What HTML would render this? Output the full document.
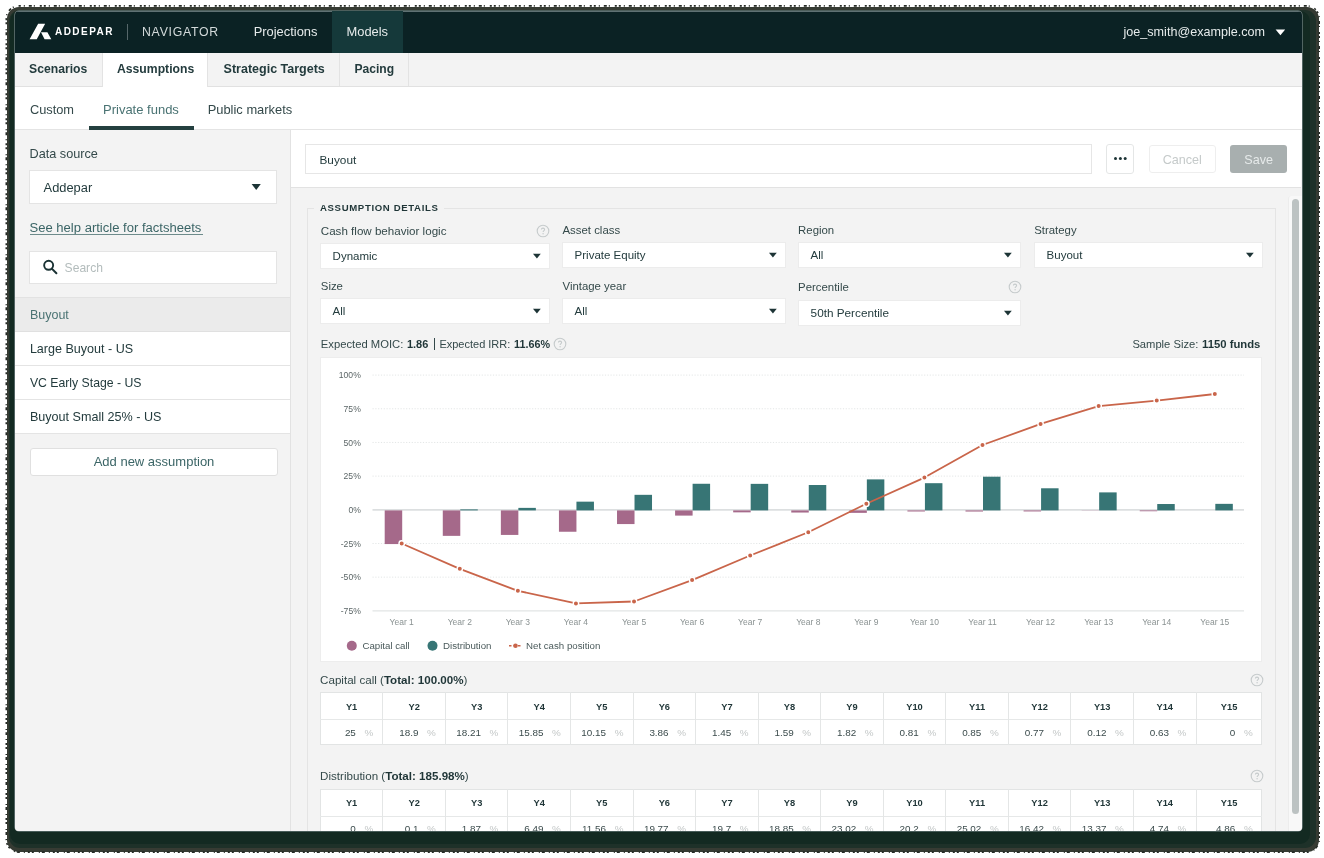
<!DOCTYPE html><html><head><meta charset="utf-8"><style>
html,body{margin:0;padding:0;width:1324px;height:858px;overflow:hidden;background:#fff;font-family:"Liberation Sans", sans-serif;}
.a{position:absolute;}
</style></head><body>
<div class="a" style="left:7px;top:6.5px;width:1311.5px;height:845px;border-radius:12px;background:#363b33;"></div>
<svg class="a" style="left:0;top:0" width="1324" height="858"><rect x="6.3" y="5.9" width="1312.9" height="846.2" rx="12.5" fill="none" stroke="#262b26" stroke-width="1.6" stroke-dasharray="2 3 1 4 3 2 1 5 2 2"/></svg>
<div class="a" style="left:8.5px;top:10px;width:1307.5px;height:838px;border-radius:11px;background:#1e3129;"></div>
<div class="a" style="left:10px;top:10.5px;width:1300px;height:833px;border-radius:10px;background:#132a22;"></div>
<div class="a" style="left:15px;top:11px;width:1287px;height:820px;border-radius:4px;overflow:hidden;will-change:transform;box-shadow:0 0 0 0.6px #7d8d8f;">
<div class="a" style="left:0;top:0;width:1287px;height:820px;background:#f3f3f3;"></div>
<div class="a" style="left:-15px;top:-11px;width:1324px;height:858px;">
<div style="position:absolute;left:0px;top:0px;width:1324px;height:53px;background:#0b2224;"></div>
<div style="position:absolute;left:0px;top:11px;width:1324px;height:1.4000000000000004px;background:#5f7173;"></div>
<div style="position:absolute;left:332px;top:0px;width:71px;height:53px;background:#15393a;"></div>
<svg class="a" style="left:29px;top:23px" width="24" height="18" viewBox="0 0 24 18"><path d="M9.15 0.8H16.15L7.75 16.3H0.6Z M12 9.2H18.4L22.3 16.3H15.6Z" fill="#fff"/></svg>
<div style="position:absolute;left:55px;top:25px;font-size:10.0px;line-height:13px;font-weight:700;color:#ffffff;letter-spacing:1.45px;white-space:nowrap;">ADDEPAR</div>
<div style="position:absolute;left:127px;top:24px;width:1px;height:16px;background:#56676a;"></div>
<div style="position:absolute;left:142px;top:24px;font-size:12.3px;line-height:16px;font-weight:400;color:#d3dada;letter-spacing:0.73px;white-space:nowrap;">NAVIGATOR</div>
<div style="position:absolute;left:253.7px;top:23px;font-size:12.9px;line-height:17px;font-weight:400;color:#e6ebeb;letter-spacing:0px;white-space:nowrap;">Projections</div>
<div style="position:absolute;left:346.5px;top:23px;font-size:12.9px;line-height:17px;font-weight:400;color:#e6ebeb;letter-spacing:0px;white-space:nowrap;">Models</div>
<div style="position:absolute;left:1123.5px;top:24px;font-size:12.6px;line-height:16px;font-weight:400;color:#e6ebeb;letter-spacing:0px;white-space:nowrap;">joe_smith@example.com</div>
<svg class="a" style="left:1275px;top:29px" width="11" height="7" viewBox="0 0 11 7"><path d="M0.6 0.5H10.2L5.4 6.2Z" fill="#fff"/></svg>
<div style="position:absolute;left:0px;top:53px;width:1324px;height:34px;background:#f3f3f3;border-bottom:1px solid #e1e1e1;box-sizing:border-box;"></div>
<div style="position:absolute;left:102px;top:53px;width:106px;height:34px;background:#fff;border-left:1px solid #e3e3e3;border-right:1px solid #e3e3e3;box-sizing:border-box;"></div>
<div style="position:absolute;left:339px;top:53px;width:1px;height:33px;background:#e3e3e3;"></div>
<div style="position:absolute;left:408px;top:53px;width:1px;height:33px;background:#e3e3e3;"></div>
<div style="position:absolute;left:29px;top:61px;font-size:12.2px;line-height:16px;font-weight:700;color:#233b3d;letter-spacing:0px;white-space:nowrap;">Scenarios</div>
<div style="position:absolute;left:117px;top:61px;font-size:12.2px;line-height:16px;font-weight:700;color:#233b3d;letter-spacing:0px;white-space:nowrap;">Assumptions</div>
<div style="position:absolute;left:223.6px;top:61px;font-size:12.5px;line-height:16px;font-weight:700;color:#233b3d;letter-spacing:0px;white-space:nowrap;">Strategic Targets</div>
<div style="position:absolute;left:354.4px;top:61px;font-size:12.1px;line-height:16px;font-weight:700;color:#233b3d;letter-spacing:0px;white-space:nowrap;">Pacing</div>
<div style="position:absolute;left:0px;top:87px;width:1324px;height:43px;background:#fff;border-bottom:1px solid #e4e4e4;box-sizing:border-box;"></div>
<div style="position:absolute;left:29.9px;top:102px;font-size:12.8px;line-height:16px;font-weight:400;color:#34494a;letter-spacing:0px;white-space:nowrap;">Custom</div>
<div style="position:absolute;left:103px;top:101px;font-size:13.0px;line-height:17px;font-weight:400;color:#4a7373;letter-spacing:0px;white-space:nowrap;">Private funds</div>
<div style="position:absolute;left:207.7px;top:101px;font-size:12.9px;line-height:17px;font-weight:400;color:#34494a;letter-spacing:0px;white-space:nowrap;">Public markets</div>
<div style="position:absolute;left:89px;top:125.5px;width:105px;height:4.0px;background:#24403f;"></div>
<div style="position:absolute;left:15px;top:130px;width:276px;height:701px;background:#f3f3f3;border-right:1px solid #e2e2e2;box-sizing:border-box;"></div>
<div style="position:absolute;left:29.5px;top:146px;font-size:12.7px;line-height:16px;font-weight:400;color:#34494a;letter-spacing:0px;white-space:nowrap;">Data source</div>
<div style="position:absolute;left:29px;top:170px;width:248px;height:34px;background:#fff;border:1px solid #e4e4e4;box-sizing:border-box;"></div>
<div style="position:absolute;left:43.6px;top:179px;font-size:12.85px;line-height:17px;font-weight:400;color:#233b3d;letter-spacing:0px;white-space:nowrap;">Addepar</div>
<svg class="a" style="left:251px;top:183px" width="11" height="8" viewBox="0 0 11 8"><path d="M0.6 1H9.8L5.2 7Z" fill="#1d3436"/></svg>
<div style="position:absolute;left:29.5px;top:219px;font-size:13.05px;line-height:17px;font-weight:400;color:#3b6566;letter-spacing:0px;white-space:nowrap;">See help article for factsheets</div>
<div style="position:absolute;left:29.5px;top:233.8px;width:173.0px;height:1.1999999999999886px;background:#6d8b8b;"></div>
<div style="position:absolute;left:29px;top:251px;width:248px;height:33px;background:#fff;border:1px solid #e4e4e4;box-sizing:border-box;"></div>
<svg class="a" style="left:42px;top:259px" width="17" height="17" viewBox="0 0 17 17"><circle cx="6.65" cy="6.3" r="4.5" fill="none" stroke="#1a3234" stroke-width="1.9"/><path d="M9.8 9.6L14.4 14.3" stroke="#1a3234" stroke-width="2" stroke-linecap="round"/></svg>
<div style="position:absolute;left:64.6px;top:260px;font-size:12.1px;line-height:16px;font-weight:400;color:#b3bcbc;letter-spacing:0px;white-space:nowrap;">Search</div>
<div style="position:absolute;left:15px;top:297px;width:275px;height:1px;background:#e2e2e2;"></div>
<div style="position:absolute;left:15px;top:298px;width:275px;height:34px;background:#ebebeb;border-bottom:1px solid #e0e0e0;box-sizing:border-box;"></div>
<div style="position:absolute;left:29.9px;top:307px;font-size:12.5px;line-height:16px;font-weight:400;color:#4a7373;letter-spacing:0px;white-space:nowrap;">Buyout</div>
<div style="position:absolute;left:15px;top:332px;width:275px;height:34px;background:#fff;border-bottom:1px solid #e4e4e4;box-sizing:border-box;"></div>
<div style="position:absolute;left:29.9px;top:341px;font-size:12.55px;line-height:16px;font-weight:400;color:#233b3d;letter-spacing:0px;white-space:nowrap;">Large Buyout - US</div>
<div style="position:absolute;left:15px;top:366px;width:275px;height:34px;background:#fff;border-bottom:1px solid #e4e4e4;box-sizing:border-box;"></div>
<div style="position:absolute;left:29.9px;top:375px;font-size:12.25px;line-height:16px;font-weight:400;color:#233b3d;letter-spacing:0px;white-space:nowrap;">VC Early Stage - US</div>
<div style="position:absolute;left:15px;top:400px;width:275px;height:34px;background:#fff;border-bottom:1px solid #e4e4e4;box-sizing:border-box;"></div>
<div style="position:absolute;left:29.9px;top:409px;font-size:12.6px;line-height:16px;font-weight:400;color:#233b3d;letter-spacing:0px;white-space:nowrap;">Buyout Small 25% - US</div>
<div style="position:absolute;left:30px;top:448px;width:248px;height:27.5px;background:#fff;border:1px solid #e0e0e0;border-radius:3px;box-sizing:border-box;"></div>
<div style="position:absolute;left:-146px;width:600px;text-align:center;top:453px;font-size:13.0px;line-height:17px;font-weight:400;color:#3b6566;letter-spacing:0px;white-space:nowrap;">Add new assumption</div>
<div style="position:absolute;left:291px;top:130px;width:1010px;height:58px;background:#fff;border-bottom:1px solid #e2e2e2;box-sizing:border-box;"></div>
<div style="position:absolute;left:305.4px;top:144.2px;width:787.0000000000001px;height:29.600000000000023px;background:#fff;border:1px solid #e6e6e6;box-sizing:border-box;"></div>
<div style="position:absolute;left:319.5px;top:153px;font-size:11.8px;line-height:15px;font-weight:400;color:#233b3d;letter-spacing:0px;white-space:nowrap;">Buyout</div>
<div style="position:absolute;left:1106.4px;top:144.2px;width:27.59999999999991px;height:29.600000000000023px;background:#fff;border:1px solid #e4e6e6;border-radius:3px;box-sizing:border-box;"></div>
<svg class="a" style="left:1106px;top:144px" width="28" height="30" viewBox="1106 144 28 30"><circle cx="1115.5" cy="158.6" r="1.5" fill="#1d3436"/><circle cx="1120.4" cy="158.6" r="1.5" fill="#1d3436"/><circle cx="1125.2" cy="158.6" r="1.5" fill="#1d3436"/></svg>
<div style="position:absolute;left:1148.6px;top:145.2px;width:67.40000000000009px;height:27.80000000000001px;background:#fff;border:1px solid #eeeeee;border-radius:3px;box-sizing:border-box;"></div>
<div style="position:absolute;left:882.3px;width:600px;text-align:center;top:152px;font-size:12.6px;line-height:16px;font-weight:400;color:#c5caca;letter-spacing:0px;white-space:nowrap;">Cancel</div>
<div style="position:absolute;left:1230.3px;top:145.2px;width:56.700000000000045px;height:27.80000000000001px;background:#a8afaf;border-radius:3px;"></div>
<div style="position:absolute;left:958.5999999999999px;width:600px;text-align:center;top:152px;font-size:12.6px;line-height:16px;font-weight:400;color:#e6eaea;letter-spacing:0px;white-space:nowrap;">Save</div>
<div style="position:absolute;left:1288px;top:196px;width:14px;height:635px;background:#f8f8f8;border-left:1px solid #ececec;border-top-left-radius:3px;box-sizing:border-box;"></div>
<div style="position:absolute;left:1292.2px;top:198.6px;width:7.0px;height:615.1px;background:#bcc2c2;border-radius:4px;"></div>
<div style="position:absolute;left:307px;top:208px;width:969px;height:692px;border:1px solid #e4e4e4;box-sizing:border-box;"></div>
<div style="position:absolute;left:314px;top:203px;width:130px;height:11px;background:#f3f3f3;"></div>
<div style="position:absolute;left:320px;top:202px;font-size:9.6px;line-height:12px;font-weight:700;color:#1f3537;letter-spacing:0.64px;white-space:nowrap;">ASSUMPTION DETAILS</div>
<div style="position:absolute;left:320.8px;top:223px;font-size:11.6px;line-height:15px;font-weight:400;color:#34494a;letter-spacing:0px;white-space:nowrap;">Cash flow behavior logic</div>
<svg class="a" style="left:536.4px;top:223.7px" width="14" height="14" viewBox="0 0 14 14"><circle cx="7" cy="7" r="5.8" fill="none" stroke="#c6cbcc" stroke-width="1.1"/><path d="M5.4 5.6C5.4 4.6 6.1 4.1 7 4.1C7.9 4.1 8.6 4.7 8.6 5.5C8.6 6.5 7.1 6.7 7.1 8.1" fill="none" stroke="#c6cbcc" stroke-width="1.1"/><circle cx="7.1" cy="9.7" r="0.7" fill="#c6cbcc"/></svg>
<div style="position:absolute;left:562.5px;top:223px;font-size:11.4px;line-height:15px;font-weight:400;color:#34494a;letter-spacing:0px;white-space:nowrap;">Asset class</div>
<div style="position:absolute;left:798.1px;top:223px;font-size:11.4px;line-height:15px;font-weight:400;color:#34494a;letter-spacing:0px;white-space:nowrap;">Region</div>
<div style="position:absolute;left:1034.2px;top:223px;font-size:11.4px;line-height:15px;font-weight:400;color:#34494a;letter-spacing:0px;white-space:nowrap;">Strategy</div>
<div style="position:absolute;left:320px;top:243px;width:230px;height:26px;background:#fff;border:1px solid #ececec;box-sizing:border-box;"></div>
<div style="position:absolute;left:332.6px;top:249px;font-size:11.5px;line-height:15px;font-weight:400;color:#233b3d;letter-spacing:0px;white-space:nowrap;">Dynamic</div>
<svg class="a" style="left:532px;top:253.3px" width="10" height="6" viewBox="0 0 10 6"><path d="M1.0 0.7H8.8L4.9 5.4Z" fill="#1d3436"/></svg>
<div style="position:absolute;left:562px;top:242px;width:224px;height:26px;background:#fff;border:1px solid #ececec;box-sizing:border-box;"></div>
<div style="position:absolute;left:574.6px;top:248px;font-size:11.5px;line-height:15px;font-weight:400;color:#233b3d;letter-spacing:0px;white-space:nowrap;">Private Equity</div>
<svg class="a" style="left:768px;top:252.3px" width="10" height="6" viewBox="0 0 10 6"><path d="M1.0 0.7H8.8L4.9 5.4Z" fill="#1d3436"/></svg>
<div style="position:absolute;left:798px;top:242px;width:223px;height:26px;background:#fff;border:1px solid #ececec;box-sizing:border-box;"></div>
<div style="position:absolute;left:810.6px;top:248px;font-size:11.5px;line-height:15px;font-weight:400;color:#233b3d;letter-spacing:0px;white-space:nowrap;">All</div>
<svg class="a" style="left:1003px;top:252.3px" width="10" height="6" viewBox="0 0 10 6"><path d="M1.0 0.7H8.8L4.9 5.4Z" fill="#1d3436"/></svg>
<div style="position:absolute;left:1034px;top:242px;width:229px;height:26px;background:#fff;border:1px solid #ececec;box-sizing:border-box;"></div>
<div style="position:absolute;left:1046.6px;top:248px;font-size:11.5px;line-height:15px;font-weight:400;color:#233b3d;letter-spacing:0px;white-space:nowrap;">Buyout</div>
<svg class="a" style="left:1245px;top:252.3px" width="10" height="6" viewBox="0 0 10 6"><path d="M1.0 0.7H8.8L4.9 5.4Z" fill="#1d3436"/></svg>
<div style="position:absolute;left:320.8px;top:279px;font-size:11.4px;line-height:15px;font-weight:400;color:#34494a;letter-spacing:0px;white-space:nowrap;">Size</div>
<div style="position:absolute;left:562.5px;top:279px;font-size:11.4px;line-height:15px;font-weight:400;color:#34494a;letter-spacing:0px;white-space:nowrap;">Vintage year</div>
<div style="position:absolute;left:798.1px;top:280px;font-size:11.4px;line-height:15px;font-weight:400;color:#34494a;letter-spacing:0px;white-space:nowrap;">Percentile</div>
<svg class="a" style="left:1007.7px;top:280px" width="14" height="14" viewBox="0 0 14 14"><circle cx="7" cy="7" r="5.8" fill="none" stroke="#c6cbcc" stroke-width="1.1"/><path d="M5.4 5.6C5.4 4.6 6.1 4.1 7 4.1C7.9 4.1 8.6 4.7 8.6 5.5C8.6 6.5 7.1 6.7 7.1 8.1" fill="none" stroke="#c6cbcc" stroke-width="1.1"/><circle cx="7.1" cy="9.7" r="0.7" fill="#c6cbcc"/></svg>
<div style="position:absolute;left:320px;top:298px;width:230px;height:26px;background:#fff;border:1px solid #ececec;box-sizing:border-box;"></div>
<div style="position:absolute;left:332.6px;top:304px;font-size:11.5px;line-height:15px;font-weight:400;color:#233b3d;letter-spacing:0px;white-space:nowrap;">All</div>
<svg class="a" style="left:532px;top:308.3px" width="10" height="6" viewBox="0 0 10 6"><path d="M1.0 0.7H8.8L4.9 5.4Z" fill="#1d3436"/></svg>
<div style="position:absolute;left:562px;top:298px;width:224px;height:26px;background:#fff;border:1px solid #ececec;box-sizing:border-box;"></div>
<div style="position:absolute;left:574.6px;top:304px;font-size:11.5px;line-height:15px;font-weight:400;color:#233b3d;letter-spacing:0px;white-space:nowrap;">All</div>
<svg class="a" style="left:768px;top:308.3px" width="10" height="6" viewBox="0 0 10 6"><path d="M1.0 0.7H8.8L4.9 5.4Z" fill="#1d3436"/></svg>
<div style="position:absolute;left:798px;top:300px;width:223px;height:26px;background:#fff;border:1px solid #ececec;box-sizing:border-box;"></div>
<div style="position:absolute;left:810.6px;top:305px;font-size:11.75px;line-height:15px;font-weight:400;color:#233b3d;letter-spacing:0px;white-space:nowrap;">50th Percentile</div>
<svg class="a" style="left:1003px;top:310.3px" width="10" height="6" viewBox="0 0 10 6"><path d="M1.0 0.7H8.8L4.9 5.4Z" fill="#1d3436"/></svg>
<div style="position:absolute;left:320.8px;top:337px;font-size:11.25px;line-height:15px;font-weight:400;color:#34494a;letter-spacing:0px;white-space:nowrap;">Expected MOIC:</div>
<div style="position:absolute;left:406.9px;top:337px;font-size:11.0px;line-height:14px;font-weight:700;color:#1f3537;letter-spacing:0px;white-space:nowrap;">1.86</div>
<div style="position:absolute;left:433.8px;top:337.5px;width:1.0px;height:12.5px;background:#34494a;"></div>
<div style="position:absolute;left:439.4px;top:337px;font-size:11.0px;line-height:14px;font-weight:400;color:#34494a;letter-spacing:0px;white-space:nowrap;">Expected IRR:</div>
<div style="position:absolute;left:514.1px;top:337px;font-size:10.8px;line-height:14px;font-weight:700;color:#1f3537;letter-spacing:0px;white-space:nowrap;">11.66%</div>
<svg class="a" style="left:553px;top:337.2px" width="14" height="14" viewBox="0 0 14 14"><circle cx="7" cy="7" r="5.8" fill="none" stroke="#c6cbcc" stroke-width="1.1"/><path d="M5.4 5.6C5.4 4.6 6.1 4.1 7 4.1C7.9 4.1 8.6 4.7 8.6 5.5C8.6 6.5 7.1 6.7 7.1 8.1" fill="none" stroke="#c6cbcc" stroke-width="1.1"/><circle cx="7.1" cy="9.7" r="0.7" fill="#c6cbcc"/></svg>
<div style="position:absolute;right:125.70000000000005px;top:337px;font-size:11.2px;line-height:14px;font-weight:400;color:#34494a;letter-spacing:0px;white-space:nowrap;">Sample Size:</div>
<div style="position:absolute;right:63.59999999999991px;top:337px;font-size:11.3px;line-height:15px;font-weight:700;color:#1f3537;letter-spacing:0px;white-space:nowrap;">1150 funds</div>
<div style="position:absolute;left:320px;top:356.5px;width:942.3px;height:305.5px;background:#fff;border:1px solid #ededed;box-sizing:border-box;"></div>
<svg class="a" style="left:0;top:0" width="1324" height="858" viewBox="0 0 1324 858"><line x1="372.5" x2="1244" y1="375.10" y2="375.10" stroke="#e3e6e6" stroke-width="1" stroke-dasharray="1.2 1.6"/><line x1="372.5" x2="1244" y1="408.78" y2="408.78" stroke="#e3e6e6" stroke-width="1" stroke-dasharray="1.2 1.6"/><line x1="372.5" x2="1244" y1="442.45" y2="442.45" stroke="#e3e6e6" stroke-width="1" stroke-dasharray="1.2 1.6"/><line x1="372.5" x2="1244" y1="476.12" y2="476.12" stroke="#e3e6e6" stroke-width="1" stroke-dasharray="1.2 1.6"/><line x1="372.5" x2="1244" y1="543.48" y2="543.48" stroke="#e3e6e6" stroke-width="1" stroke-dasharray="1.2 1.6"/><line x1="372.5" x2="1244" y1="577.15" y2="577.15" stroke="#e3e6e6" stroke-width="1" stroke-dasharray="1.2 1.6"/><line x1="372.5" x2="1244" y1="610.83" y2="610.83" stroke="#e2e5e5" stroke-width="1.2"/><text x="360.8" y="378.20" font-size="8.6" fill="#5c6667" text-anchor="end" font-family="Liberation Sans">100%</text><text x="360.8" y="411.88" font-size="8.6" fill="#5c6667" text-anchor="end" font-family="Liberation Sans">75%</text><text x="360.8" y="445.55" font-size="8.6" fill="#5c6667" text-anchor="end" font-family="Liberation Sans">50%</text><text x="360.8" y="479.23" font-size="8.6" fill="#5c6667" text-anchor="end" font-family="Liberation Sans">25%</text><text x="360.8" y="512.90" font-size="8.6" fill="#5c6667" text-anchor="end" font-family="Liberation Sans">0%</text><text x="360.8" y="546.58" font-size="8.6" fill="#5c6667" text-anchor="end" font-family="Liberation Sans">-25%</text><text x="360.8" y="580.25" font-size="8.6" fill="#5c6667" text-anchor="end" font-family="Liberation Sans">-50%</text><text x="360.8" y="613.93" font-size="8.6" fill="#5c6667" text-anchor="end" font-family="Liberation Sans">-75%</text><line x1="372.5" x2="1244" y1="509.80" y2="509.80" stroke="#dcdfe0" stroke-width="1.7"/><rect x="384.70" y="510.40" width="17.5" height="33.67" fill="#a5698a"/><text x="401.70" y="625.1" font-size="8.5" fill="#8a9292" text-anchor="middle" font-family="Liberation Sans">Year 1</text><rect x="442.78" y="510.40" width="17.5" height="25.46" fill="#a5698a"/><rect x="460.28" y="509.40" width="17.5" height="1.00" fill="#377575"/><text x="459.78" y="625.1" font-size="8.5" fill="#8a9292" text-anchor="middle" font-family="Liberation Sans">Year 2</text><rect x="500.86" y="510.40" width="17.5" height="24.53" fill="#a5698a"/><rect x="518.36" y="507.88" width="17.5" height="2.52" fill="#377575"/><text x="517.86" y="625.1" font-size="8.5" fill="#8a9292" text-anchor="middle" font-family="Liberation Sans">Year 3</text><rect x="558.94" y="510.40" width="17.5" height="21.35" fill="#a5698a"/><rect x="576.44" y="501.66" width="17.5" height="8.74" fill="#377575"/><text x="575.94" y="625.1" font-size="8.5" fill="#8a9292" text-anchor="middle" font-family="Liberation Sans">Year 4</text><rect x="617.02" y="510.40" width="17.5" height="13.67" fill="#a5698a"/><rect x="634.52" y="494.83" width="17.5" height="15.57" fill="#377575"/><text x="634.02" y="625.1" font-size="8.5" fill="#8a9292" text-anchor="middle" font-family="Liberation Sans">Year 5</text><rect x="675.10" y="510.40" width="17.5" height="5.20" fill="#a5698a"/><rect x="692.60" y="483.77" width="17.5" height="26.63" fill="#377575"/><text x="692.10" y="625.1" font-size="8.5" fill="#8a9292" text-anchor="middle" font-family="Liberation Sans">Year 6</text><rect x="733.18" y="510.40" width="17.5" height="1.95" fill="#a5698a"/><rect x="750.68" y="483.86" width="17.5" height="26.54" fill="#377575"/><text x="750.18" y="625.1" font-size="8.5" fill="#8a9292" text-anchor="middle" font-family="Liberation Sans">Year 7</text><rect x="791.26" y="510.40" width="17.5" height="2.14" fill="#a5698a"/><rect x="808.76" y="485.01" width="17.5" height="25.39" fill="#377575"/><text x="808.26" y="625.1" font-size="8.5" fill="#8a9292" text-anchor="middle" font-family="Liberation Sans">Year 8</text><rect x="849.34" y="510.40" width="17.5" height="2.45" fill="#a5698a"/><rect x="866.84" y="479.39" width="17.5" height="31.01" fill="#377575"/><text x="866.34" y="625.1" font-size="8.5" fill="#8a9292" text-anchor="middle" font-family="Liberation Sans">Year 9</text><rect x="907.42" y="510.40" width="17.5" height="1.09" fill="#a5698a"/><rect x="924.92" y="483.19" width="17.5" height="27.21" fill="#377575"/><text x="924.42" y="625.1" font-size="8.5" fill="#8a9292" text-anchor="middle" font-family="Liberation Sans">Year 10</text><rect x="965.50" y="510.40" width="17.5" height="1.14" fill="#a5698a"/><rect x="983.00" y="476.70" width="17.5" height="33.70" fill="#377575"/><text x="982.50" y="625.1" font-size="8.5" fill="#8a9292" text-anchor="middle" font-family="Liberation Sans">Year 11</text><rect x="1023.58" y="510.40" width="17.5" height="1.04" fill="#a5698a"/><rect x="1041.08" y="488.28" width="17.5" height="22.12" fill="#377575"/><text x="1040.58" y="625.1" font-size="8.5" fill="#8a9292" text-anchor="middle" font-family="Liberation Sans">Year 12</text><rect x="1081.66" y="510.40" width="17.5" height="0.16" fill="#a5698a"/><rect x="1099.16" y="492.39" width="17.5" height="18.01" fill="#377575"/><text x="1098.66" y="625.1" font-size="8.5" fill="#8a9292" text-anchor="middle" font-family="Liberation Sans">Year 13</text><rect x="1139.74" y="510.40" width="17.5" height="0.85" fill="#a5698a"/><rect x="1157.24" y="504.02" width="17.5" height="6.38" fill="#377575"/><text x="1156.74" y="625.1" font-size="8.5" fill="#8a9292" text-anchor="middle" font-family="Liberation Sans">Year 14</text><rect x="1215.32" y="503.85" width="17.5" height="6.55" fill="#377575"/><text x="1214.82" y="625.1" font-size="8.5" fill="#8a9292" text-anchor="middle" font-family="Liberation Sans">Year 15</text><polyline points="401.70,543.48 459.78,568.80 517.86,590.81 575.94,603.42 634.02,601.52 692.10,580.09 750.18,555.50 808.26,532.25 866.34,503.70 924.42,477.58 982.50,445.02 1040.58,423.94 1098.66,406.09 1156.74,400.56 1214.82,394.01" fill="none" stroke="#c9654a" stroke-width="1.8" stroke-linejoin="round"/><circle cx="401.70" cy="543.48" r="2.7" fill="#c9654a" stroke="#fff" stroke-width="1.4"/><circle cx="459.78" cy="568.80" r="2.7" fill="#c9654a" stroke="#fff" stroke-width="1.4"/><circle cx="517.86" cy="590.81" r="2.7" fill="#c9654a" stroke="#fff" stroke-width="1.4"/><circle cx="575.94" cy="603.42" r="2.7" fill="#c9654a" stroke="#fff" stroke-width="1.4"/><circle cx="634.02" cy="601.52" r="2.7" fill="#c9654a" stroke="#fff" stroke-width="1.4"/><circle cx="692.10" cy="580.09" r="2.7" fill="#c9654a" stroke="#fff" stroke-width="1.4"/><circle cx="750.18" cy="555.50" r="2.7" fill="#c9654a" stroke="#fff" stroke-width="1.4"/><circle cx="808.26" cy="532.25" r="2.7" fill="#c9654a" stroke="#fff" stroke-width="1.4"/><circle cx="866.34" cy="503.70" r="2.7" fill="#c9654a" stroke="#fff" stroke-width="1.4"/><circle cx="924.42" cy="477.58" r="2.7" fill="#c9654a" stroke="#fff" stroke-width="1.4"/><circle cx="982.50" cy="445.02" r="2.7" fill="#c9654a" stroke="#fff" stroke-width="1.4"/><circle cx="1040.58" cy="423.94" r="2.7" fill="#c9654a" stroke="#fff" stroke-width="1.4"/><circle cx="1098.66" cy="406.09" r="2.7" fill="#c9654a" stroke="#fff" stroke-width="1.4"/><circle cx="1156.74" cy="400.56" r="2.7" fill="#c9654a" stroke="#fff" stroke-width="1.4"/><circle cx="1214.82" cy="394.01" r="2.7" fill="#c9654a" stroke="#fff" stroke-width="1.4"/><circle cx="351.8" cy="645.7" r="5" fill="#a5698a"/><text x="362.4" y="649" font-size="9.7" fill="#4a5a5b" font-family="Liberation Sans">Capital call</text><circle cx="432.5" cy="645.7" r="5" fill="#377575"/><text x="443" y="649" font-size="9.7" fill="#4a5a5b" font-family="Liberation Sans">Distribution</text><line x1="509" x2="522" y1="645.7" y2="645.7" stroke="#c9654a" stroke-width="1.5" stroke-dasharray="2.5 2"/><circle cx="515.5" cy="645.7" r="2.3" fill="#c9654a"/><text x="526" y="649" font-size="9.7" fill="#4a5a5b" font-family="Liberation Sans">Net cash position</text></svg>
<div style="position:absolute;left:320.1px;top:672px;font-size:11.6px;line-height:15px;font-weight:400;color:#34494a;letter-spacing:0px;white-space:nowrap;">Capital call (<b style="color:#1f3537">Total: 100.00%</b>)</div>
<svg class="a" style="left:1249.7px;top:672.8000000000001px" width="14" height="14" viewBox="0 0 14 14"><circle cx="7" cy="7" r="5.8" fill="none" stroke="#c6cbcc" stroke-width="1.1"/><path d="M5.4 5.6C5.4 4.6 6.1 4.1 7 4.1C7.9 4.1 8.6 4.7 8.6 5.5C8.6 6.5 7.1 6.7 7.1 8.1" fill="none" stroke="#c6cbcc" stroke-width="1.1"/><circle cx="7.1" cy="9.7" r="0.7" fill="#c6cbcc"/></svg>
<div style="position:absolute;left:320.3px;top:691.8px;width:942.0px;height:52.799999999999955px;background:#fff;border:1px solid #e2e4e4;box-sizing:border-box;"></div>
<div style="position:absolute;left:320.3px;top:718.6999999999999px;width:942.0px;height:1.0px;background:#e6e8e8;"></div>
<div style="position:absolute;left:382.35px;top:691.8px;width:1.0px;height:52.799999999999955px;background:#e4e6e6;"></div>
<div style="position:absolute;left:444.9px;top:691.8px;width:1.0px;height:52.799999999999955px;background:#e4e6e6;"></div>
<div style="position:absolute;left:507.45px;top:691.8px;width:1.0px;height:52.799999999999955px;background:#e4e6e6;"></div>
<div style="position:absolute;left:570.0px;top:691.8px;width:1.0px;height:52.799999999999955px;background:#e4e6e6;"></div>
<div style="position:absolute;left:632.55px;top:691.8px;width:1.0px;height:52.799999999999955px;background:#e4e6e6;"></div>
<div style="position:absolute;left:695.0999999999999px;top:691.8px;width:1.0px;height:52.799999999999955px;background:#e4e6e6;"></div>
<div style="position:absolute;left:757.65px;top:691.8px;width:1.0px;height:52.799999999999955px;background:#e4e6e6;"></div>
<div style="position:absolute;left:820.2px;top:691.8px;width:1.0px;height:52.799999999999955px;background:#e4e6e6;"></div>
<div style="position:absolute;left:882.75px;top:691.8px;width:1.0px;height:52.799999999999955px;background:#e4e6e6;"></div>
<div style="position:absolute;left:945.3px;top:691.8px;width:1.0px;height:52.799999999999955px;background:#e4e6e6;"></div>
<div style="position:absolute;left:1007.8499999999999px;top:691.8px;width:1.0px;height:52.799999999999955px;background:#e4e6e6;"></div>
<div style="position:absolute;left:1070.3999999999999px;top:691.8px;width:1.0px;height:52.799999999999955px;background:#e4e6e6;"></div>
<div style="position:absolute;left:1132.95px;top:691.8px;width:1.0px;height:52.799999999999955px;background:#e4e6e6;"></div>
<div style="position:absolute;left:1195.5px;top:691.8px;width:1.0px;height:52.799999999999955px;background:#e4e6e6;"></div>
<div style="position:absolute;left:51.575000000000045px;width:600px;text-align:center;top:701px;font-size:9.3px;line-height:12px;font-weight:700;color:#1f3537;letter-spacing:0px;white-space:nowrap;">Y1</div>
<div style="position:absolute;right:968.15px;top:726px;font-size:9.9px;line-height:13px;font-weight:400;color:#3c4c4d;letter-spacing:0px;white-space:nowrap;">25</div>
<div style="position:absolute;left:364.45000000000005px;top:726px;font-size:9.9px;line-height:13px;font-weight:400;color:#c3c7c7;letter-spacing:0px;white-space:nowrap;">%</div>
<div style="position:absolute;left:114.125px;width:600px;text-align:center;top:701px;font-size:9.3px;line-height:12px;font-weight:700;color:#1f3537;letter-spacing:0px;white-space:nowrap;">Y2</div>
<div style="position:absolute;right:905.6px;top:726px;font-size:9.9px;line-height:13px;font-weight:400;color:#3c4c4d;letter-spacing:0px;white-space:nowrap;">18.9</div>
<div style="position:absolute;left:427.0px;top:726px;font-size:9.9px;line-height:13px;font-weight:400;color:#c3c7c7;letter-spacing:0px;white-space:nowrap;">%</div>
<div style="position:absolute;left:176.67499999999995px;width:600px;text-align:center;top:701px;font-size:9.3px;line-height:12px;font-weight:700;color:#1f3537;letter-spacing:0px;white-space:nowrap;">Y3</div>
<div style="position:absolute;right:843.05px;top:726px;font-size:9.9px;line-height:13px;font-weight:400;color:#3c4c4d;letter-spacing:0px;white-space:nowrap;">18.21</div>
<div style="position:absolute;left:489.55px;top:726px;font-size:9.9px;line-height:13px;font-weight:400;color:#c3c7c7;letter-spacing:0px;white-space:nowrap;">%</div>
<div style="position:absolute;left:239.22500000000002px;width:600px;text-align:center;top:701px;font-size:9.3px;line-height:12px;font-weight:700;color:#1f3537;letter-spacing:0px;white-space:nowrap;">Y4</div>
<div style="position:absolute;right:780.5px;top:726px;font-size:9.9px;line-height:13px;font-weight:400;color:#3c4c4d;letter-spacing:0px;white-space:nowrap;">15.85</div>
<div style="position:absolute;left:552.1px;top:726px;font-size:9.9px;line-height:13px;font-weight:400;color:#c3c7c7;letter-spacing:0px;white-space:nowrap;">%</div>
<div style="position:absolute;left:301.775px;width:600px;text-align:center;top:701px;font-size:9.3px;line-height:12px;font-weight:700;color:#1f3537;letter-spacing:0px;white-space:nowrap;">Y5</div>
<div style="position:absolute;right:717.95px;top:726px;font-size:9.9px;line-height:13px;font-weight:400;color:#3c4c4d;letter-spacing:0px;white-space:nowrap;">10.15</div>
<div style="position:absolute;left:614.65px;top:726px;font-size:9.9px;line-height:13px;font-weight:400;color:#c3c7c7;letter-spacing:0px;white-space:nowrap;">%</div>
<div style="position:absolute;left:364.32499999999993px;width:600px;text-align:center;top:701px;font-size:9.3px;line-height:12px;font-weight:700;color:#1f3537;letter-spacing:0px;white-space:nowrap;">Y6</div>
<div style="position:absolute;right:655.4000000000001px;top:726px;font-size:9.9px;line-height:13px;font-weight:400;color:#3c4c4d;letter-spacing:0px;white-space:nowrap;">3.86</div>
<div style="position:absolute;left:677.1999999999999px;top:726px;font-size:9.9px;line-height:13px;font-weight:400;color:#c3c7c7;letter-spacing:0px;white-space:nowrap;">%</div>
<div style="position:absolute;left:426.875px;width:600px;text-align:center;top:701px;font-size:9.3px;line-height:12px;font-weight:700;color:#1f3537;letter-spacing:0px;white-space:nowrap;">Y7</div>
<div style="position:absolute;right:592.85px;top:726px;font-size:9.9px;line-height:13px;font-weight:400;color:#3c4c4d;letter-spacing:0px;white-space:nowrap;">1.45</div>
<div style="position:absolute;left:739.75px;top:726px;font-size:9.9px;line-height:13px;font-weight:400;color:#c3c7c7;letter-spacing:0px;white-space:nowrap;">%</div>
<div style="position:absolute;left:489.42499999999995px;width:600px;text-align:center;top:701px;font-size:9.3px;line-height:12px;font-weight:700;color:#1f3537;letter-spacing:0px;white-space:nowrap;">Y8</div>
<div style="position:absolute;right:530.3px;top:726px;font-size:9.9px;line-height:13px;font-weight:400;color:#3c4c4d;letter-spacing:0px;white-space:nowrap;">1.59</div>
<div style="position:absolute;left:802.3000000000001px;top:726px;font-size:9.9px;line-height:13px;font-weight:400;color:#c3c7c7;letter-spacing:0px;white-space:nowrap;">%</div>
<div style="position:absolute;left:551.975px;width:600px;text-align:center;top:701px;font-size:9.3px;line-height:12px;font-weight:700;color:#1f3537;letter-spacing:0px;white-space:nowrap;">Y9</div>
<div style="position:absolute;right:467.75px;top:726px;font-size:9.9px;line-height:13px;font-weight:400;color:#3c4c4d;letter-spacing:0px;white-space:nowrap;">1.82</div>
<div style="position:absolute;left:864.85px;top:726px;font-size:9.9px;line-height:13px;font-weight:400;color:#c3c7c7;letter-spacing:0px;white-space:nowrap;">%</div>
<div style="position:absolute;left:614.525px;width:600px;text-align:center;top:701px;font-size:9.3px;line-height:12px;font-weight:700;color:#1f3537;letter-spacing:0px;white-space:nowrap;">Y10</div>
<div style="position:absolute;right:405.20000000000005px;top:726px;font-size:9.9px;line-height:13px;font-weight:400;color:#3c4c4d;letter-spacing:0px;white-space:nowrap;">0.81</div>
<div style="position:absolute;left:927.4px;top:726px;font-size:9.9px;line-height:13px;font-weight:400;color:#c3c7c7;letter-spacing:0px;white-space:nowrap;">%</div>
<div style="position:absolute;left:677.0749999999999px;width:600px;text-align:center;top:701px;font-size:9.3px;line-height:12px;font-weight:700;color:#1f3537;letter-spacing:0px;white-space:nowrap;">Y11</div>
<div style="position:absolute;right:342.6500000000001px;top:726px;font-size:9.9px;line-height:13px;font-weight:400;color:#3c4c4d;letter-spacing:0px;white-space:nowrap;">0.85</div>
<div style="position:absolute;left:989.9499999999999px;top:726px;font-size:9.9px;line-height:13px;font-weight:400;color:#c3c7c7;letter-spacing:0px;white-space:nowrap;">%</div>
<div style="position:absolute;left:739.625px;width:600px;text-align:center;top:701px;font-size:9.3px;line-height:12px;font-weight:700;color:#1f3537;letter-spacing:0px;white-space:nowrap;">Y12</div>
<div style="position:absolute;right:280.10000000000014px;top:726px;font-size:9.9px;line-height:13px;font-weight:400;color:#3c4c4d;letter-spacing:0px;white-space:nowrap;">0.77</div>
<div style="position:absolute;left:1052.4999999999998px;top:726px;font-size:9.9px;line-height:13px;font-weight:400;color:#c3c7c7;letter-spacing:0px;white-space:nowrap;">%</div>
<div style="position:absolute;left:802.175px;width:600px;text-align:center;top:701px;font-size:9.3px;line-height:12px;font-weight:700;color:#1f3537;letter-spacing:0px;white-space:nowrap;">Y13</div>
<div style="position:absolute;right:217.54999999999995px;top:726px;font-size:9.9px;line-height:13px;font-weight:400;color:#3c4c4d;letter-spacing:0px;white-space:nowrap;">0.12</div>
<div style="position:absolute;left:1115.05px;top:726px;font-size:9.9px;line-height:13px;font-weight:400;color:#c3c7c7;letter-spacing:0px;white-space:nowrap;">%</div>
<div style="position:absolute;left:864.7249999999999px;width:600px;text-align:center;top:701px;font-size:9.3px;line-height:12px;font-weight:700;color:#1f3537;letter-spacing:0px;white-space:nowrap;">Y14</div>
<div style="position:absolute;right:155.0px;top:726px;font-size:9.9px;line-height:13px;font-weight:400;color:#3c4c4d;letter-spacing:0px;white-space:nowrap;">0.63</div>
<div style="position:absolute;left:1177.6px;top:726px;font-size:9.9px;line-height:13px;font-weight:400;color:#c3c7c7;letter-spacing:0px;white-space:nowrap;">%</div>
<div style="position:absolute;left:929.1500000000001px;width:600px;text-align:center;top:701px;font-size:9.3px;line-height:12px;font-weight:700;color:#1f3537;letter-spacing:0px;white-space:nowrap;">Y15</div>
<div style="position:absolute;right:88.70000000000005px;top:726px;font-size:9.9px;line-height:13px;font-weight:400;color:#3c4c4d;letter-spacing:0px;white-space:nowrap;">0</div>
<div style="position:absolute;left:1243.8999999999999px;top:726px;font-size:9.9px;line-height:13px;font-weight:400;color:#c3c7c7;letter-spacing:0px;white-space:nowrap;">%</div>
<div style="position:absolute;left:320.1px;top:768px;font-size:11.6px;line-height:15px;font-weight:400;color:#34494a;letter-spacing:0px;white-space:nowrap;">Distribution (<b style="color:#1f3537">Total: 185.98%</b>)</div>
<svg class="a" style="left:1249.7px;top:768.9px" width="14" height="14" viewBox="0 0 14 14"><circle cx="7" cy="7" r="5.8" fill="none" stroke="#c6cbcc" stroke-width="1.1"/><path d="M5.4 5.6C5.4 4.6 6.1 4.1 7 4.1C7.9 4.1 8.6 4.7 8.6 5.5C8.6 6.5 7.1 6.7 7.1 8.1" fill="none" stroke="#c6cbcc" stroke-width="1.1"/><circle cx="7.1" cy="9.7" r="0.7" fill="#c6cbcc"/></svg>
<div style="position:absolute;left:320.3px;top:788.7px;width:942.0px;height:52.799999999999955px;background:#fff;border:1px solid #e2e4e4;box-sizing:border-box;"></div>
<div style="position:absolute;left:320.3px;top:815.6px;width:942.0px;height:1.0px;background:#e6e8e8;"></div>
<div style="position:absolute;left:382.35px;top:788.7px;width:1.0px;height:52.799999999999955px;background:#e4e6e6;"></div>
<div style="position:absolute;left:444.9px;top:788.7px;width:1.0px;height:52.799999999999955px;background:#e4e6e6;"></div>
<div style="position:absolute;left:507.45px;top:788.7px;width:1.0px;height:52.799999999999955px;background:#e4e6e6;"></div>
<div style="position:absolute;left:570.0px;top:788.7px;width:1.0px;height:52.799999999999955px;background:#e4e6e6;"></div>
<div style="position:absolute;left:632.55px;top:788.7px;width:1.0px;height:52.799999999999955px;background:#e4e6e6;"></div>
<div style="position:absolute;left:695.0999999999999px;top:788.7px;width:1.0px;height:52.799999999999955px;background:#e4e6e6;"></div>
<div style="position:absolute;left:757.65px;top:788.7px;width:1.0px;height:52.799999999999955px;background:#e4e6e6;"></div>
<div style="position:absolute;left:820.2px;top:788.7px;width:1.0px;height:52.799999999999955px;background:#e4e6e6;"></div>
<div style="position:absolute;left:882.75px;top:788.7px;width:1.0px;height:52.799999999999955px;background:#e4e6e6;"></div>
<div style="position:absolute;left:945.3px;top:788.7px;width:1.0px;height:52.799999999999955px;background:#e4e6e6;"></div>
<div style="position:absolute;left:1007.8499999999999px;top:788.7px;width:1.0px;height:52.799999999999955px;background:#e4e6e6;"></div>
<div style="position:absolute;left:1070.3999999999999px;top:788.7px;width:1.0px;height:52.799999999999955px;background:#e4e6e6;"></div>
<div style="position:absolute;left:1132.95px;top:788.7px;width:1.0px;height:52.799999999999955px;background:#e4e6e6;"></div>
<div style="position:absolute;left:1195.5px;top:788.7px;width:1.0px;height:52.799999999999955px;background:#e4e6e6;"></div>
<div style="position:absolute;left:51.575000000000045px;width:600px;text-align:center;top:797px;font-size:9.3px;line-height:12px;font-weight:700;color:#1f3537;letter-spacing:0px;white-space:nowrap;">Y1</div>
<div style="position:absolute;right:968.15px;top:822px;font-size:9.9px;line-height:13px;font-weight:400;color:#3c4c4d;letter-spacing:0px;white-space:nowrap;">0</div>
<div style="position:absolute;left:364.45000000000005px;top:822px;font-size:9.9px;line-height:13px;font-weight:400;color:#c3c7c7;letter-spacing:0px;white-space:nowrap;">%</div>
<div style="position:absolute;left:114.125px;width:600px;text-align:center;top:797px;font-size:9.3px;line-height:12px;font-weight:700;color:#1f3537;letter-spacing:0px;white-space:nowrap;">Y2</div>
<div style="position:absolute;right:905.6px;top:822px;font-size:9.9px;line-height:13px;font-weight:400;color:#3c4c4d;letter-spacing:0px;white-space:nowrap;">0.1</div>
<div style="position:absolute;left:427.0px;top:822px;font-size:9.9px;line-height:13px;font-weight:400;color:#c3c7c7;letter-spacing:0px;white-space:nowrap;">%</div>
<div style="position:absolute;left:176.67499999999995px;width:600px;text-align:center;top:797px;font-size:9.3px;line-height:12px;font-weight:700;color:#1f3537;letter-spacing:0px;white-space:nowrap;">Y3</div>
<div style="position:absolute;right:843.05px;top:822px;font-size:9.9px;line-height:13px;font-weight:400;color:#3c4c4d;letter-spacing:0px;white-space:nowrap;">1.87</div>
<div style="position:absolute;left:489.55px;top:822px;font-size:9.9px;line-height:13px;font-weight:400;color:#c3c7c7;letter-spacing:0px;white-space:nowrap;">%</div>
<div style="position:absolute;left:239.22500000000002px;width:600px;text-align:center;top:797px;font-size:9.3px;line-height:12px;font-weight:700;color:#1f3537;letter-spacing:0px;white-space:nowrap;">Y4</div>
<div style="position:absolute;right:780.5px;top:822px;font-size:9.9px;line-height:13px;font-weight:400;color:#3c4c4d;letter-spacing:0px;white-space:nowrap;">6.49</div>
<div style="position:absolute;left:552.1px;top:822px;font-size:9.9px;line-height:13px;font-weight:400;color:#c3c7c7;letter-spacing:0px;white-space:nowrap;">%</div>
<div style="position:absolute;left:301.775px;width:600px;text-align:center;top:797px;font-size:9.3px;line-height:12px;font-weight:700;color:#1f3537;letter-spacing:0px;white-space:nowrap;">Y5</div>
<div style="position:absolute;right:717.95px;top:822px;font-size:9.9px;line-height:13px;font-weight:400;color:#3c4c4d;letter-spacing:0px;white-space:nowrap;">11.56</div>
<div style="position:absolute;left:614.65px;top:822px;font-size:9.9px;line-height:13px;font-weight:400;color:#c3c7c7;letter-spacing:0px;white-space:nowrap;">%</div>
<div style="position:absolute;left:364.32499999999993px;width:600px;text-align:center;top:797px;font-size:9.3px;line-height:12px;font-weight:700;color:#1f3537;letter-spacing:0px;white-space:nowrap;">Y6</div>
<div style="position:absolute;right:655.4000000000001px;top:822px;font-size:9.9px;line-height:13px;font-weight:400;color:#3c4c4d;letter-spacing:0px;white-space:nowrap;">19.77</div>
<div style="position:absolute;left:677.1999999999999px;top:822px;font-size:9.9px;line-height:13px;font-weight:400;color:#c3c7c7;letter-spacing:0px;white-space:nowrap;">%</div>
<div style="position:absolute;left:426.875px;width:600px;text-align:center;top:797px;font-size:9.3px;line-height:12px;font-weight:700;color:#1f3537;letter-spacing:0px;white-space:nowrap;">Y7</div>
<div style="position:absolute;right:592.85px;top:822px;font-size:9.9px;line-height:13px;font-weight:400;color:#3c4c4d;letter-spacing:0px;white-space:nowrap;">19.7</div>
<div style="position:absolute;left:739.75px;top:822px;font-size:9.9px;line-height:13px;font-weight:400;color:#c3c7c7;letter-spacing:0px;white-space:nowrap;">%</div>
<div style="position:absolute;left:489.42499999999995px;width:600px;text-align:center;top:797px;font-size:9.3px;line-height:12px;font-weight:700;color:#1f3537;letter-spacing:0px;white-space:nowrap;">Y8</div>
<div style="position:absolute;right:530.3px;top:822px;font-size:9.9px;line-height:13px;font-weight:400;color:#3c4c4d;letter-spacing:0px;white-space:nowrap;">18.85</div>
<div style="position:absolute;left:802.3000000000001px;top:822px;font-size:9.9px;line-height:13px;font-weight:400;color:#c3c7c7;letter-spacing:0px;white-space:nowrap;">%</div>
<div style="position:absolute;left:551.975px;width:600px;text-align:center;top:797px;font-size:9.3px;line-height:12px;font-weight:700;color:#1f3537;letter-spacing:0px;white-space:nowrap;">Y9</div>
<div style="position:absolute;right:467.75px;top:822px;font-size:9.9px;line-height:13px;font-weight:400;color:#3c4c4d;letter-spacing:0px;white-space:nowrap;">23.02</div>
<div style="position:absolute;left:864.85px;top:822px;font-size:9.9px;line-height:13px;font-weight:400;color:#c3c7c7;letter-spacing:0px;white-space:nowrap;">%</div>
<div style="position:absolute;left:614.525px;width:600px;text-align:center;top:797px;font-size:9.3px;line-height:12px;font-weight:700;color:#1f3537;letter-spacing:0px;white-space:nowrap;">Y10</div>
<div style="position:absolute;right:405.20000000000005px;top:822px;font-size:9.9px;line-height:13px;font-weight:400;color:#3c4c4d;letter-spacing:0px;white-space:nowrap;">20.2</div>
<div style="position:absolute;left:927.4px;top:822px;font-size:9.9px;line-height:13px;font-weight:400;color:#c3c7c7;letter-spacing:0px;white-space:nowrap;">%</div>
<div style="position:absolute;left:677.0749999999999px;width:600px;text-align:center;top:797px;font-size:9.3px;line-height:12px;font-weight:700;color:#1f3537;letter-spacing:0px;white-space:nowrap;">Y11</div>
<div style="position:absolute;right:342.6500000000001px;top:822px;font-size:9.9px;line-height:13px;font-weight:400;color:#3c4c4d;letter-spacing:0px;white-space:nowrap;">25.02</div>
<div style="position:absolute;left:989.9499999999999px;top:822px;font-size:9.9px;line-height:13px;font-weight:400;color:#c3c7c7;letter-spacing:0px;white-space:nowrap;">%</div>
<div style="position:absolute;left:739.625px;width:600px;text-align:center;top:797px;font-size:9.3px;line-height:12px;font-weight:700;color:#1f3537;letter-spacing:0px;white-space:nowrap;">Y12</div>
<div style="position:absolute;right:280.10000000000014px;top:822px;font-size:9.9px;line-height:13px;font-weight:400;color:#3c4c4d;letter-spacing:0px;white-space:nowrap;">16.42</div>
<div style="position:absolute;left:1052.4999999999998px;top:822px;font-size:9.9px;line-height:13px;font-weight:400;color:#c3c7c7;letter-spacing:0px;white-space:nowrap;">%</div>
<div style="position:absolute;left:802.175px;width:600px;text-align:center;top:797px;font-size:9.3px;line-height:12px;font-weight:700;color:#1f3537;letter-spacing:0px;white-space:nowrap;">Y13</div>
<div style="position:absolute;right:217.54999999999995px;top:822px;font-size:9.9px;line-height:13px;font-weight:400;color:#3c4c4d;letter-spacing:0px;white-space:nowrap;">13.37</div>
<div style="position:absolute;left:1115.05px;top:822px;font-size:9.9px;line-height:13px;font-weight:400;color:#c3c7c7;letter-spacing:0px;white-space:nowrap;">%</div>
<div style="position:absolute;left:864.7249999999999px;width:600px;text-align:center;top:797px;font-size:9.3px;line-height:12px;font-weight:700;color:#1f3537;letter-spacing:0px;white-space:nowrap;">Y14</div>
<div style="position:absolute;right:155.0px;top:822px;font-size:9.9px;line-height:13px;font-weight:400;color:#3c4c4d;letter-spacing:0px;white-space:nowrap;">4.74</div>
<div style="position:absolute;left:1177.6px;top:822px;font-size:9.9px;line-height:13px;font-weight:400;color:#c3c7c7;letter-spacing:0px;white-space:nowrap;">%</div>
<div style="position:absolute;left:929.1500000000001px;width:600px;text-align:center;top:797px;font-size:9.3px;line-height:12px;font-weight:700;color:#1f3537;letter-spacing:0px;white-space:nowrap;">Y15</div>
<div style="position:absolute;right:88.70000000000005px;top:822px;font-size:9.9px;line-height:13px;font-weight:400;color:#3c4c4d;letter-spacing:0px;white-space:nowrap;">4.86</div>
<div style="position:absolute;left:1243.8999999999999px;top:822px;font-size:9.9px;line-height:13px;font-weight:400;color:#c3c7c7;letter-spacing:0px;white-space:nowrap;">%</div>
</div></div>
</body></html>
